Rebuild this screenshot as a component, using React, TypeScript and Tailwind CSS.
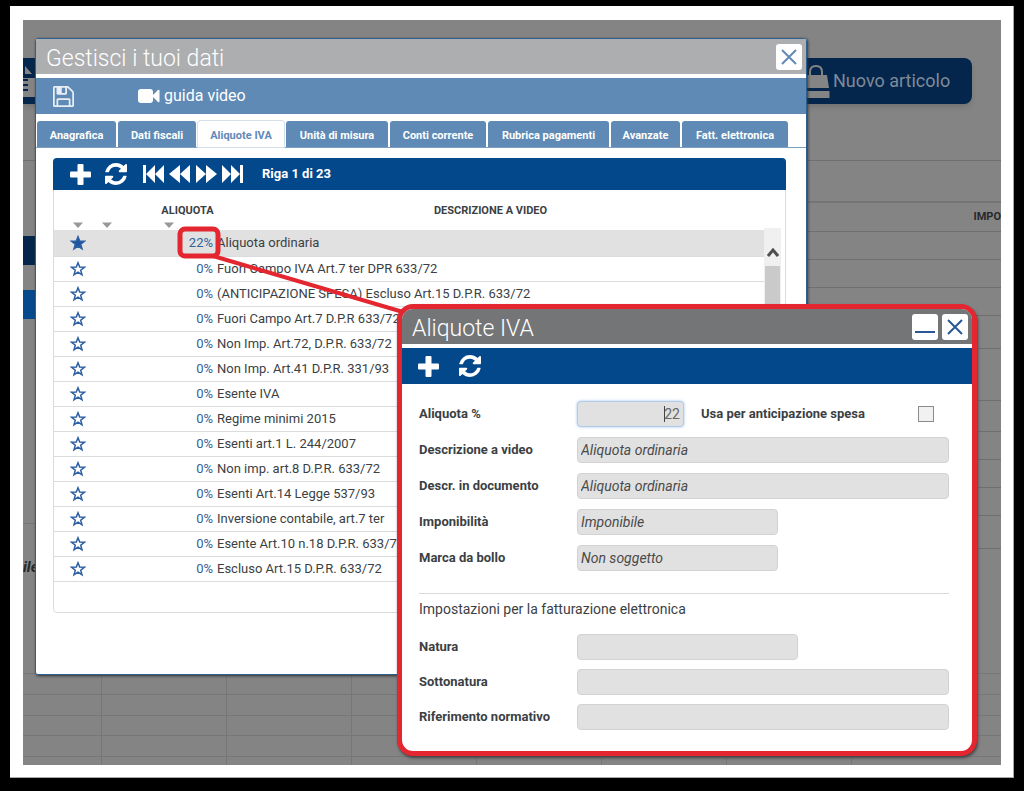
import type { ReactNode } from "react";

type Rate = {
  percent: string;
  description: string;
  favourite?: boolean;
};

const TABS = [
  { label: "Anagrafica", width: "w-[79px]" },
  { label: "Dati fiscali", width: "w-[78px]" },
  { label: "Aliquote IVA", width: "w-[86px]", active: true },
  { label: "Unità di misura", width: "w-[102px]" },
  { label: "Conti corrente", width: "w-[96px]" },
  { label: "Rubrica pagamenti", width: "w-[121px]" },
  { label: "Avanzate", width: "w-[69px]" },
  { label: "Fatt. elettronica", width: "w-[106px]" },
];

const RATES: Rate[] = [
  { percent: "22%", description: "Aliquota ordinaria", favourite: true },
  { percent: "0%", description: "Fuori Campo IVA Art.7 ter DPR 633/72" },
  { percent: "0%", description: "(ANTICIPAZIONE SPESA) Escluso Art.15 D.P.R. 633/72" },
  { percent: "0%", description: "Fuori Campo Art.7 D.P.R 633/72" },
  { percent: "0%", description: "Non Imp. Art.72, D.P.R. 633/72" },
  { percent: "0%", description: "Non Imp. Art.41 D.P.R. 331/93" },
  { percent: "0%", description: "Esente IVA" },
  { percent: "0%", description: "Regime minimi 2015" },
  { percent: "0%", description: "Esenti art.1 L. 244/2007" },
  { percent: "0%", description: "Non imp. art.8 D.P.R. 633/72" },
  { percent: "0%", description: "Esenti Art.14 Legge 537/93" },
  { percent: "0%", description: "Inversione contabile, art.7 ter" },
  { percent: "0%", description: "Esente Art.10 n.18 D.P.R. 633/72" },
  { percent: "0%", description: "Escluso Art.15 D.P.R. 633/72" },
];

// row heights of the document behind the dialogs
const PAGE_ROWS = ["h-7", "h-7", "h-7", "h-[33px]", "h-[52px]", "h-[31px]", "h-7", "h-7", "h-7", "h-[33px]"];

const FIELD =
  "h-[26px] rounded border border-[#d2d2d2] bg-[#e1e1e1] px-[3px] text-sm italic text-[#4a4a4a] outline-none";

export default function App() {
  return (
    <main className="min-h-screen bg-black px-[10px] pt-[6px] pb-[13px] font-[Roboto,sans-serif] text-[#3b3f44]">
      <div className="border-r border-b border-[#a9a9a9] bg-white pt-[14px] pr-3 pb-3 pl-[13px]">
        <div className="relative overflow-hidden bg-[#848484]">
          <PageBehind />
          <DataDialog />
          {/* Callout from the selected rate to its form */}
          <svg className="pointer-events-none absolute inset-0 h-full w-full" fill="none" stroke="#e3262f">
            <rect x="157" y="209" width="38" height="27" rx="5" strokeWidth="5" />
            <path d="M190 236 L380 292" strokeWidth="4" />
          </svg>
          <RateDialog />
        </div>
      </div>
    </main>
  );
}

function PageBehind() {
  return (
    <div>
      <div className="flex h-[141px] items-start justify-between border-b border-[#6f6f6f] pt-[38px] pr-[29px]">
        <button className="flex h-[46px] w-[100px] items-center bg-[#04264c] shadow-md" aria-label="Nuovo documento">
          <svg width="20" height="34" viewBox="0 0 20 34">
            <path d="M2 2 L9 10 H2 Z" fill="#848484" />
            <path d="M0 14 H20 V33 H0 Z" fill="#848484" />
            <path d="M0 16 H5 M0 21 H5 M0 26 H5" stroke="#04264c" strokeWidth="2" />
          </svg>
        </button>
        <button className="flex h-[46px] w-[180px] items-center gap-[2px] rounded-lg bg-[#04264c] pl-[11px] text-lg text-[#7f8a99] shadow-md">
          <svg width="28" height="36" viewBox="0 0 28 36">
            <path d="M4 12 H24 L26 25 H2 Z M2 28 H26.500 V35 H1 Z" fill="#848484" />
            <path d="M7 16 V9 Q7 3 13 3 Q19 3 19 9 V15" fill="none" stroke="#848484" strokeWidth="2" />
          </svg>
          Nuovo articolo
        </button>
      </div>
      <div className="flex">
        <div className="w-20 pt-[75px]">
          <div className="mb-[25px] h-[29px] bg-[#04264c]" />
          <div className="h-[29px] bg-[#06498c]" />
          <div className="h-[205px] border-b border-[#777777]" />
          <p className="pt-8 text-[15px] font-bold text-[#26282c] italic">ile</p>
        </div>
        <div className="flex-1">
          <div className="h-[42px] border-b-2 border-[#747474]" />
          <div className="flex h-[29px] items-center justify-end border-b border-[#6f6f6f] text-[11px] font-bold text-[#26282c]">
            IMPO
          </div>
          {PAGE_ROWS.map((height, i) => (
            <div key={i} className={`border-b border-[#6f6f6f] ${height}`} />
          ))}
        </div>
      </div>
      {/* Footer grid */}
      <div className="mt-[94px] border-t border-[#777777]">
        {["h-[21px]", "h-[21px]", "h-5", "h-[21px]", "h-2"].map((height, i) => (
          <div key={i} className={`flex border-b border-[#777777] last:border-b-0 ${height}`}>
            <div className="w-[79px] border-r border-[#777777]" />
            {[0, 1, 2, 3, 4, 5].map((c) => (
              <div key={c} className="w-[125px] border-r border-[#777777]" />
            ))}
          </div>
        ))}
      </div>
    </div>
  );
}

function DataDialog() {
  return (
    <section className="absolute top-[18px] right-[194px] left-[12px] rounded-[3px] border border-[#2f5f8f] bg-white pb-[61px] shadow-[1px_1px_3px_#333]">
      <TitleBar title="Gestisci i tuoi dati" tone="bg-[#adaeb0]">
        <CloseButton color="#6289b8" />
      </TitleBar>

      <div className="mt-1 flex h-9 items-center gap-[64px] bg-[#5e8ab5] pl-[17px] text-white">
        <button aria-label="Salva">
          <svg width="21" height="21" viewBox="128 128 1536 1536" fill="#e6edf4">
            <path d="M512 1536h768v-384h-768v384zm896 0h128v-896q0-14-10-38.500t-20-34.500l-281-281q-10-10-34-20t-39-10v416q0 40-28 68t-68 28h-576q-40 0-68-28t-28-68v-416h-128v1280h128v-416q0-40 28-68t68-28h832q40 0 68 28t28 68v416zm-384-928v-320q0-13-9.500-22.500t-22.500-9.500h-192q-13 0-22.500 9.500t-9.500 22.500v320q0 13 9.500 22.500t22.500 9.500h192q13 0 22.500-9.500t9.500-22.500zm640 32v928q0 40-28 68t-68 28h-1344q-40 0-68-28t-28-68v-1344q0-40 28-68t68-28h928q40 0 88 20t76 48l280 280q28 28 48 76t20 88z" />
          </svg>
        </button>
        <a href="#guida" className="flex items-center gap-1 text-base">
          <svg width="22" height="16" viewBox="0 0 22 16" fill="currentColor">
            <rect x="0" y="1" width="15" height="14" rx="3" />
            <path d="M14 8 L20 2 Q21.500 1 21.500 3 V13 Q21.500 15 20 14 Z" />
          </svg>
          guida video
        </a>
      </div>

      <div role="tablist" className="mt-[7px] flex gap-[2px] border-b border-[#7d9fc2] pl-px">
        {TABS.map((tab) => (
          <button
            key={tab.label}
            role="tab"
            aria-selected={!!tab.active}
            className={`h-[26px] shrink-0 rounded-t-[3px] pt-1 text-[11px] font-bold whitespace-nowrap ${tab.width} ${
              tab.active ? "-mb-px bg-white text-[#6289b8] ring-1 ring-[#d5e0eb]" : "bg-[#5e8ab5] text-white"
            }`}
          >
            {tab.label}
          </button>
        ))}
      </div>

      <div className="mt-[10px] mr-5 ml-[17px] rounded-[4px] border border-[#dcdcdc] pb-[30px]">
        <div className="-mx-px -mt-px flex h-8 items-center rounded-t-[4px] bg-[#04488c] pl-[17px] text-white">
          <button aria-label="Aggiungi" className="mr-[14px]">
            <PlusIcon />
          </button>
          <button aria-label="Aggiorna" className="mr-4">
            <RefreshIcon />
          </button>
          <div className="flex gap-1">
            <button aria-label="Prima riga"><SkipIcon bar /></button>
            <button aria-label="Riga precedente"><SkipIcon /></button>
            <button aria-label="Riga successiva"><SkipIcon forward /></button>
            <button aria-label="Ultima riga"><SkipIcon forward bar /></button>
          </div>
          <span className="ml-[19px] text-[13px] font-bold">Riga 1 di 23</span>
        </div>

        <div className="flex pr-1">
          <table className="flex-1 table-fixed border-collapse text-[13px]">
            <thead>
              <tr className="h-10 text-[11px] font-bold">
                <th className="w-12 pt-8 align-top"><SortArrow className="mx-auto" /></th>
                <th className="w-14 pt-8 align-top"><SortArrow /></th>
                <th className="w-[59px] pt-[13px] align-top leading-4 whitespace-nowrap">
                  ALIQUOTA
                  <SortArrow className="mt-[3px] ml-[6px]" />
                </th>
                <th className="pt-[13px] align-top leading-4">DESCRIZIONE A VIDEO</th>
              </tr>
            </thead>
            <tbody>
              {RATES.map((rate) => (
                <tr
                  key={rate.description}
                  className={`border-b border-[#dcdcdc] ${rate.favourite ? "h-[26px] bg-[#e1e1e1]" : "h-[25px]"}`}
                >
                  <td><StarIcon filled={rate.favourite} /></td>
                  <td />
                  <td className="pr-1 text-right text-[#336299]">{rate.percent}</td>
                  <td className="whitespace-nowrap">{rate.description}</td>
                </tr>
              ))}
            </tbody>
          </table>
          <div className="mt-[38px] flex w-[17px] flex-col bg-[#f0f0f0]">
            <svg className="mt-[18px] mb-2 ml-[3px]" width="12" height="12" viewBox="0 0 12 12" fill="none" stroke="#505050">
              <path d="M1 10 L6 4 L11 10" strokeWidth="3" />
            </svg>
            <div className="mx-px h-[150px] bg-[#cacaca]" />
          </div>
        </div>
      </div>
    </section>
  );
}

function RateDialog() {
  return (
    <section className="absolute top-[284px] right-[24px] left-[374px] overflow-hidden rounded-2xl border-[5px] border-[#e3262f] bg-white pb-[21px] shadow-[1px_2px_3px_#444]">
      <TitleBar title="Aliquote IVA" tone="bg-[#747577]">
        <button aria-label="Riduci" className="flex h-[26px] w-[26px] items-end justify-center rounded-[3px] bg-white pb-[7px]">
          <span className="h-[2px] w-5 bg-[#2a5795]" />
        </button>
        <CloseButton color="#2a5795" />
      </TitleBar>

      <div className="mt-1 flex h-9 items-center gap-5 bg-[#04488c] pl-4 text-white">
        <button aria-label="Aggiungi"><PlusIcon /></button>
        <button aria-label="Aggiorna"><RefreshIcon /></button>
      </div>

      <form className="pt-[17px] pr-[23px] pl-[17px]">
        <div className="flex flex-col gap-[10px]">
          <div className="flex items-center">
            <Label id="aliquota">Aliquota %</Label>
            <div className="relative w-[107px]">
              <input
                id="aliquota"
                defaultValue="22"
                className="h-[26px] w-full rounded border border-[#b4cbe8] bg-[#e1e1e1] pr-[3px] text-right text-sm text-[#666666] shadow-[0_0_3px_#9dc0f0] outline-none"
              />
              <span className="absolute top-[5px] right-[19px] h-4 w-px bg-[#444444]" />
            </div>
            <label htmlFor="anticipo" className="ml-[17px] text-[13px] font-bold">Usa per anticipazione spesa</label>
            <input
              id="anticipo"
              type="checkbox"
              className="mr-[15px] ml-auto h-4 w-4 appearance-none border border-[#8a8a8a] bg-[#f1f1f1]"
            />
          </div>
          <div className="flex items-center">
            <Label id="video">Descrizione a video</Label>
            <input id="video" defaultValue="Aliquota ordinaria" className={`min-w-0 flex-1 ${FIELD}`} />
          </div>
          <div className="flex items-center">
            <Label id="documento">Descr. in documento</Label>
            <input id="documento" defaultValue="Aliquota ordinaria" className={`min-w-0 flex-1 ${FIELD}`} />
          </div>
          <div className="flex items-center">
            <Label id="imponibilita">Imponibilità</Label>
            <select id="imponibilita" className={`w-[201px] appearance-none ${FIELD}`}>
              <option>Imponibile</option>
            </select>
          </div>
          <div className="flex items-center">
            <Label id="bollo">Marca da bollo</Label>
            <select id="bollo" className={`w-[201px] appearance-none ${FIELD}`}>
              <option>Non soggetto</option>
            </select>
          </div>
        </div>

        <h2 className="mt-[22px] mb-[15px] border-t border-[#d9d9d9] pt-[5px] text-sm">
          Impostazioni per la fatturazione elettronica
        </h2>

        <div className="flex flex-col gap-[9px]">
          <div className="flex items-center">
            <Label id="natura">Natura</Label>
            <select id="natura" className={`w-[221px] appearance-none ${FIELD}`} />
          </div>
          <div className="flex items-center">
            <Label id="sottonatura">Sottonatura</Label>
            <select id="sottonatura" className={`min-w-0 flex-1 appearance-none ${FIELD}`} />
          </div>
          <div className="flex items-center">
            <Label id="riferimento">Riferimento normativo</Label>
            <input id="riferimento" className={`min-w-0 flex-1 ${FIELD}`} />
          </div>
        </div>
      </form>
    </section>
  );
}

function TitleBar({ title, tone, children }: { title: string; tone: string; children: ReactNode }) {
  return (
    <header className={`flex h-[35px] items-center gap-1 pr-1 pl-[10px] ${tone}`}>
      <h1 className="mr-auto pt-1 text-[23px] leading-7 font-light text-white">{title}</h1>
      {children}
    </header>
  );
}

function Label({ id, children }: { id: string; children: ReactNode }) {
  return (
    <label htmlFor={id} className="w-[158px] shrink-0 text-[13px] font-bold whitespace-nowrap">
      {children}
    </label>
  );
}

function CloseButton({ color }: { color: string }) {
  return (
    <button aria-label="Chiudi" className="flex h-[26px] w-[26px] items-center justify-center rounded-[3px] bg-white">
      <svg width="16" height="16" viewBox="0 0 16 16" fill="none" stroke={color} strokeWidth="2">
        <path d="M1 1 L15 15 M15 1 L1 15" />
      </svg>
    </button>
  );
}

function PlusIcon() {
  return (
    <svg width="21" height="21" viewBox="0 0 21 21" fill="currentColor">
      <rect x="0" y="7.500" width="21" height="6" rx="1" />
      <rect x="7.500" y="0" width="6" height="21" rx="1" />
    </svg>
  );
}

function RefreshIcon() {
  return (
    <svg width="22" height="22" viewBox="128 128 1536 1536" fill="currentColor">
      <path d="M1639 1056q0 5-1 7-64 268-268 434.500t-478 166.500q-146 0-282.500-55t-243.500-157l-129 129q-19 19-45 19t-45-19-19-45v-448q0-26 19-45t45-19h448q26 0 45 19t19 45-19 45l-137 137q71 66 161 102t187 36q134 0 250-65t186-179q11-17 53-117 8-23 30-23h192q13 0 22.500 9.500t9.500 22.500zm25-800v448q0 26-19 45t-45 19h-448q-26 0-45-19t-19-45 19-45l138-138q-148-137-349-137-134 0-250 65t-186 179q-11 17-53 117-8 23-30 23h-199q-13 0-22.500-9.500t-9.500-22.500v-7q65-268 270-434.500t480-166.500q146 0 284 55.500t245 156.500l130-129q19-19 45-19t45 19 19 45z" />
    </svg>
  );
}

function SkipIcon({ forward, bar }: { forward?: boolean; bar?: boolean }) {
  return (
    <svg width="22" height="18" viewBox="0 0 22 18" fill="currentColor" className={forward ? "rotate-180" : ""}>
      {bar ? (
        <path d="M0 0 H3 V18 H0 Z M3 9 L12 0 V18 Z M12 9 L21 0 V18 Z" />
      ) : (
        <path d="M0 9 L11 0 V18 Z M11 9 L21 0 V18 Z" />
      )}
    </svg>
  );
}

function SortArrow({ className = "" }: { className?: string }) {
  return (
    <svg width="10" height="6" viewBox="0 0 10 6" fill="#999999" className={`block ${className}`}>
      <path d="M0 0.500 H10 L5 6 Z" />
    </svg>
  );
}

function StarIcon({ filled }: { filled?: boolean }) {
  return (
    <svg width="16" height="16" viewBox="0 0 16 16" className="mx-auto" stroke="#2c5fa3" fill={filled ? "#1c56a3" : "none"}>
      <path
        d="M8 1.800 L9.700 6.100 L14.300 6.300 L10.700 9.200 L12 13.800 L8 11.200 L4 13.800 L5.300 9.200 L1.700 6.300 L6.300 6.100 Z"
        strokeWidth="1.500"
      />
    </svg>
  );
}
